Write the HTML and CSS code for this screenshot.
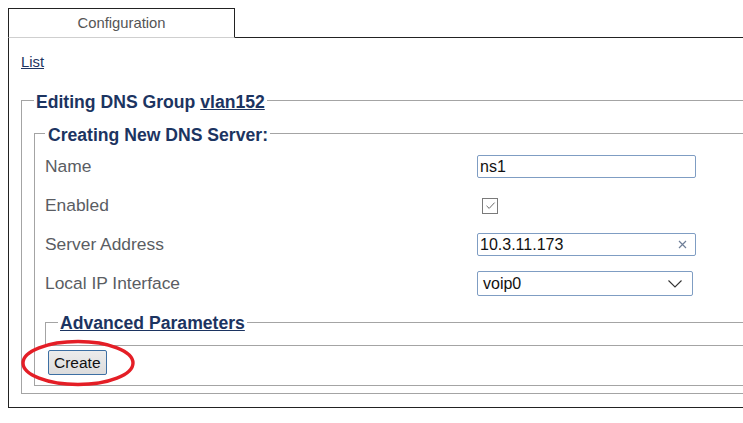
FILE: index.html
```html
<!DOCTYPE html>
<html>
<head>
<meta charset="utf-8">
<link rel="stylesheet" href="styles.css">
</head>
<body>
<div class="tabrow">
  <div class="tab">Configuration</div>
  <div class="tabfill"></div>
</div>
<div class="panel">
  <div class="listline"><a class="link" href="#">List</a></div>
  <fieldset class="fs fs-outer">
    <legend class="lg lg-big">Editing DNS Group <a class="lg-link" href="#">vlan152</a></legend>
    <fieldset class="fs fs-inner">
      <legend class="lg lg-big lg-inner">Creating New DNS Server:</legend>
      <div class="grid">
        <div class="lbl">Name</div>
        <div class="ctl"><div class="box box-text"><input class="txt" type="text" value="ns1"></div></div>
        <div class="lbl">Enabled</div>
        <div class="ctl"><span class="chk"><svg width="13" height="13" viewBox="0 0 13 13"><path d="M2.5 6.8 L5.2 9.4 L10.6 3.6" fill="none" stroke="#6a6a6a" stroke-width="1"/></svg></span></div>
        <div class="lbl">Server Address</div>
        <div class="ctl"><div class="box box-text"><input class="txt" type="text" value="10.3.11.173"><svg class="clr" width="9" height="9" viewBox="0 0 9 9"><path d="M1 1 L8 8 M8 1 L1 8" stroke="#6f7f98" stroke-width="1.2"/></svg></div></div>
        <div class="lbl">Local IP Interface</div>
        <div class="ctl"><div class="box box-sel"><span class="selval">voip0</span><svg class="chev" width="14" height="8" viewBox="0 0 14 8"><path d="M0.5 0.5 L7 7 L13.5 0.5" fill="none" stroke="#333" stroke-width="1.1"/></svg></div></div>
      </div>
      <fieldset class="fs fs-adv">
        <legend class="lg lg-adv"><a class="lg-link" href="#">Advanced Parameters</a></legend>
      </fieldset>
      <div class="btnwrap">
        <button class="btn" type="button">Create</button>
        <svg class="ring" width="118" height="50" viewBox="0 0 118 50"><ellipse cx="59" cy="25" rx="55" ry="21.5" fill="none" stroke="#e41e26" stroke-width="3.4"/></svg>
      </div>
    </fieldset>
  </fieldset>
</div>
</body>
</html>
```
FILE: styles.css
```css
html, body {
  margin: 0;
  padding: 0;
  overflow: hidden;
  background: #fff;
}
body {
  font-family: "Liberation Sans", Arial, sans-serif;
  width: 900px;
}
.tabrow {
  display: flex;
  margin: 8px 0 0 8px;
}
.tab {
  width: 225px;
  height: 28px;
  line-height: 28px;
  text-align: center;
  font-size: 14.8px;
  color: #555;
  border-top: 1px solid #222;
  border-left: 1px solid #222;
  border-right: 1px solid #222;
  border-bottom: 1px solid #cfcfcf;
}
.tabfill {
  flex: 1;
  border-bottom: 1px solid #222;
}
.panel {
  margin-left: 8px;
  width: 820px;
  border-left: 1px solid #222;
  border-bottom: 1px solid #222;
  padding: 16px 12px 13px 12px;
}
.listline {
  font-size: 14.8px;
  line-height: 17px;
  margin-bottom: 17px;
}
.link {
  color: #1c3461;
  text-decoration: underline;
}
.fs {
  margin: 0;
  border: 1px solid #a4a4a4;
  min-width: 0;
}
.fs-outer {
  padding: 9px 12px 7px 12px;
}
.fs-inner {
  padding: 2px 12px 10px 10px;
}
.fs-adv {
  margin-top: 8px;
  padding: 0 12px 12px 12px;
}
.lg {
  color: #1c3461;
  font-weight: bold;
  font-size: 17.6px;
  line-height: 20px;
}
.lg-big {
  padding: 4px 2px 0 2px;
}
.lg-inner {
  padding-left: 3px;
}
.lg-adv {
  padding: 2px 2px 0 2px;
}
.lg-link {
  color: #1c3461;
  text-decoration: underline;
}
.grid {
  display: grid;
  grid-template-columns: 432px 222px;
  grid-auto-rows: 39px;
  align-items: center;
}
.lbl {
  font-size: 17.4px;
  color: #5a5d63;
}
.ctl {
  display: flex;
  align-items: center;
}
.box {
  box-sizing: border-box;
  display: flex;
  align-items: center;
  border: 1px solid #7f9dc3;
  border-radius: 2px;
  background: #fff;
}
.box-text {
  width: 219px;
  height: 23px;
}
.txt {
  flex: 1;
  min-width: 0;
  border: 0;
  outline: 0;
  padding: 0 0 0 2px;
  margin: 0;
  font-family: "Liberation Sans", Arial, sans-serif;
  font-size: 16px;
  color: #111;
  background: transparent;
}
.clr {
  margin-right: 8px;
}
.box-sel {
  width: 216px;
  height: 25px;
  justify-content: space-between;
}
.selval {
  padding-left: 5px;
  font-size: 16px;
  color: #111;
}
.chev {
  margin-right: 10px;
}
.chk {
  display: flex;
  align-items: center;
  justify-content: center;
  box-sizing: border-box;
  width: 16px;
  height: 16px;
  margin-left: 5px;
  border: 1px solid #7a7a7a;
  background: #fff;
}
.btnwrap {
  position: relative;
  display: flex;
  align-items: center;
  margin-top: 4px;
}
.btn {
  height: 25px;
  margin: 0 0 0 3px;
  padding: 0 5px;
  font-family: "Liberation Sans", Arial, sans-serif;
  font-size: 15.5px;
  color: #111;
  border: 1px solid #3d6fa3;
  border-radius: 2px;
  background: linear-gradient(#ececec, #dcdcdc);
}
.ring {
  position: absolute;
  left: -26px;
  top: -12px;
}
```
